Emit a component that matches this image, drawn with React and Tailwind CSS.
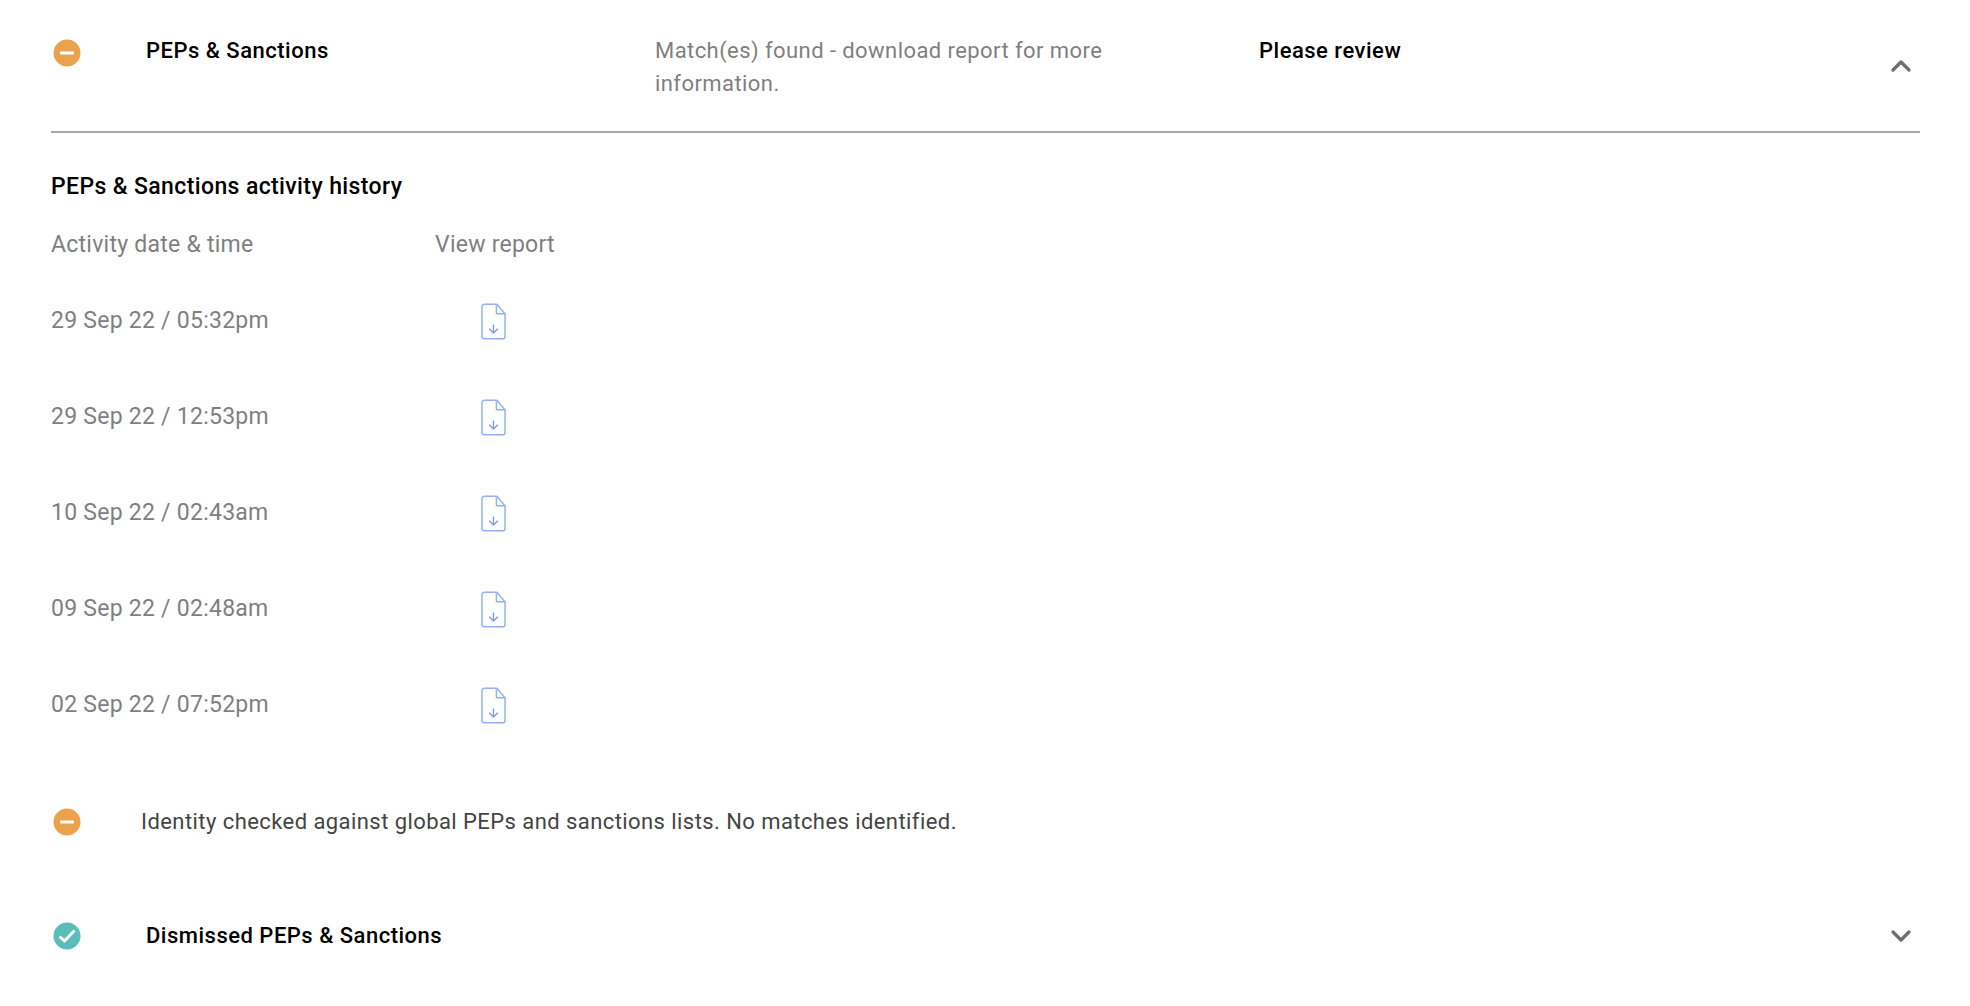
import React from 'react';
import { ChevronUp, ChevronDown } from 'lucide-react';

const rows = [
  '29 Sep 22 / 05:32pm',
  '29 Sep 22 / 12:53pm',
  '10 Sep 22 / 02:43am',
  '09 Sep 22 / 02:48am',
  '02 Sep 22 / 07:52pm',
];

const MinusBadge = () => (
  <svg width="28" height="28" viewBox="0 0 28 28" className="block">
    <circle cx="14" cy="14" r="13.5" fill="#eaa24c" />
    <rect x="7" y="12.5" width="14" height="3" rx="1" fill="#fff" />
  </svg>
);

const CheckBadge = () => (
  <svg width="28" height="28" viewBox="0 0 28 28" className="block">
    <circle cx="14" cy="14" r="13.5" fill="#5bbdba" />
    <path d="M6.500 14.500l5 4.500 10-10.500" fill="none" stroke="#fff" strokeWidth="3" />
  </svg>
);

const ReportIcon = () => (
  <svg width="25" height="37" viewBox="0 0 26 38" fill="none" stroke="#8fb0f2" strokeWidth="1.5" className="block">
    <path d="M3.500 1h13L25 11v23.500a2.500 2.500 0 0 1-2.500 2.500h-19A2.500 2.500 0 0 1 1 34.500v-31A2.500 2.500 0 0 1 3.500 1z" />
    <path d="M16 1v8a2 2 0 0 0 2 2h7" />
    <path d="M13 22v9M8.500 26.500l4.500 4.500 4.500-4.500" stroke="#7f9fe6" />
  </svg>
);

const App = () => {
  return (
    <div className="w-[1970px] h-[1006px] bg-white overflow-hidden font-['Roboto',sans-serif] text-[22px] leading-[33px] tracking-[0.43px] text-[#7f7f7f]">
      <div className="pl-[51px] pr-[50px]">
        {/* Main check */}
        <div className="flex items-start h-[133px] pt-[34px] border-b-2 border-[#a8a8a8]">
          <div className="w-[94px] pl-[2px] pt-[5px]">
            <MinusBadge />
          </div>
          <div className="w-[510px] pl-[1px] font-medium tracking-[0.5px] text-black">PEPs &amp; Sanctions</div>
          <div className="w-[604px]">
            <div className="w-[480px]">Match(es) found - download report for more information.</div>
          </div>
          <div className="flex-1 font-medium tracking-[0.5px] text-black">Please review</div>
          <ChevronUp size={32} strokeWidth={2.500} className="mt-[16px] mr-[3px] text-[#6e6e6e]" />
        </div>

        {/* Activity history */}
        <h2 className="mt-[37px] text-[23px] font-medium tracking-[0.38px] text-black">PEPs &amp; Sanctions activity history</h2>
        <div className="flex mt-[25px] text-[23px] tracking-[0.25px]">
          <div className="w-[384px]">Activity date &amp; time</div>
          <div>View report</div>
        </div>
        <div className="mt-[13px] text-[23px] tracking-[0.25px]">
          {rows.map((row) => (
            <div key={row} className="flex items-center h-[96px]">
              <div className="w-[430px] pb-[3px]">{row}</div>
              <div className="pb-[2px]">
                <ReportIcon />
              </div>
            </div>
          ))}
        </div>

        {/* Note */}
        <div className="flex items-center mt-[51px] text-[#444444]">
          <div className="w-[90px] pl-[2px]">
            <MinusBadge />
          </div>
          <div>Identity checked against global PEPs and sanctions lists. No matches identified.</div>
        </div>

        {/* Dismissed */}
        <div className="flex items-center mt-[81px] font-medium tracking-[0.5px] text-black">
          <div className="w-[94px] pl-[2px]">
            <CheckBadge />
          </div>
          <div className="flex-1 pl-[1px]">Dismissed PEPs &amp; Sanctions</div>
          <ChevronDown size={32} strokeWidth={2.500} className="mr-[3px] text-[#6e6e6e]" />
        </div>
      </div>
    </div>
  );
};

export default App;
